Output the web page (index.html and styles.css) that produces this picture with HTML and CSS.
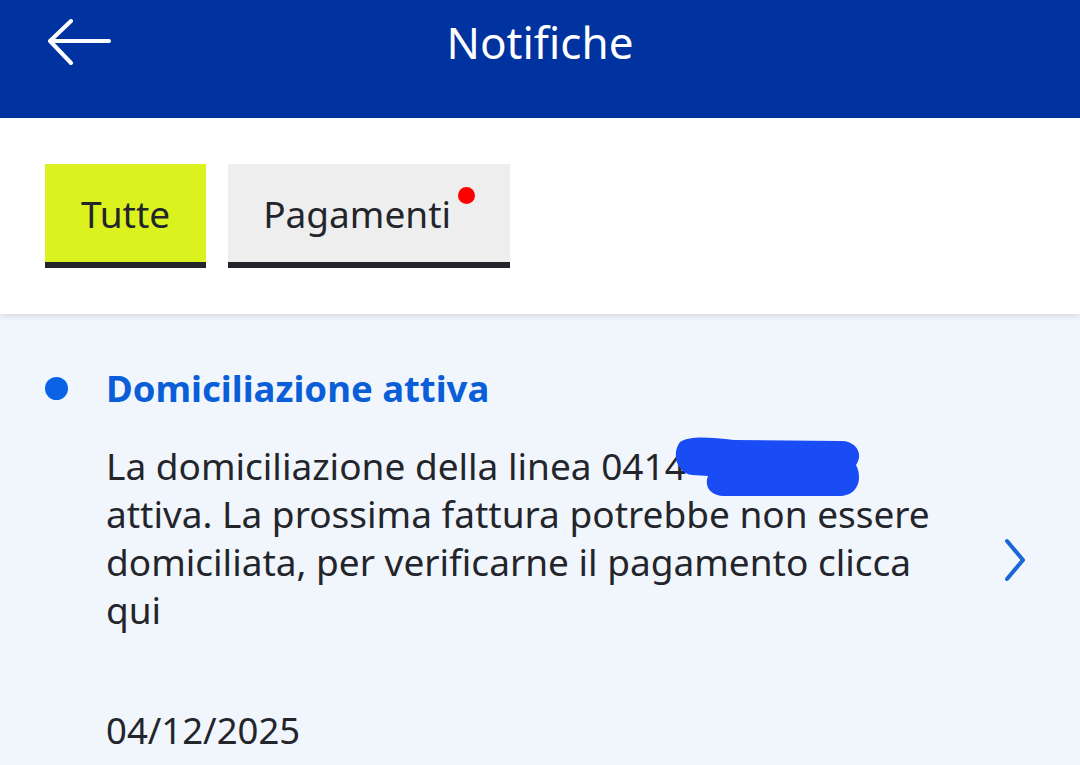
FILE: index.html
```html
<!DOCTYPE html>
<html lang="it">
  <head>
    <meta charset="utf-8">
    <title>Notifiche</title>
    <link rel="stylesheet" href="styles.css">
  </head>
  <body>
    <header class="topbar">
      <a class="back" href="#" aria-label="Indietro">
        <svg width="64" height="46" viewBox="0 0 64 46">
          <path d="M62 22 H4 M24 2 L3 22 L24 44" fill="none" stroke="#fff" stroke-width="4" stroke-linecap="round" stroke-linejoin="round"/>
        </svg>
      </a>
      <h1>Notifiche</h1>
    </header>

    <nav class="tabs">
      <button class="tab active">Tutte</button>
      <button class="tab">Pagamenti<span class="badge"></span></button>
    </nav>

    <section class="list">
      <article class="notice">
        <span class="unread"></span>
        <div class="notice-body">
          <h2>Domiciliazione attiva</h2>
          <p>La domiciliazione della linea 0414<br>
            attiva. La prossima fattura potrebbe non essere domiciliata, per verificarne il pagamento clicca qui
            <svg class="redact" width="190" height="66" viewBox="0 0 190 66">
              <path d="M8 8 C20 1 40 4 62 6 L168 7 C184 6 192 20 184 31 C190 42 188 60 170 62 L52 62 C38 62 32 52 36 42 L20 41 C5 39 -1 20 8 8 Z" fill="#1a4cf5"/>
            </svg>
          </p>
          <time>04/12/2025</time>
        </div>
        <svg class="chevron" width="24" height="44" viewBox="0 0 24 44">
          <path d="M4 3 L20 22 L4 41" fill="none" stroke="#1a66d6" stroke-width="4" stroke-linecap="round" stroke-linejoin="round"/>
        </svg>
      </article>
    </section>
  </body>
</html>
```

FILE: styles.css
```css
body {
  margin: 0;
  font-family: "Noto Sans", "Open Sans", sans-serif;
  background: #f1f6fd;
  color: #23252b;
}

.topbar {
  height: 118px;
  background: #0033a0;
  position: relative;
  display: flex;
  justify-content: center;
}
.topbar h1 {
  margin: 0;
  padding-top: 12px;
  font-size: 44px;
  font-weight: 400;
  color: #fff;
  line-height: 60px;
}
.back {
  position: absolute;
  left: 47px;
  top: 19px;
}

.tabs {
  background: #fff;
  height: 196px;
  box-sizing: border-box;
  padding: 46px 0 0 45px;
  display: flex;
  gap: 22px;
  align-items: flex-start;
  box-shadow: 0 2px 6px rgba(0, 0, 0, 0.12);
  position: relative;
}
.tab {
  height: 104px;
  border: 0;
  border-bottom: 6px solid #23252b;
  background: #eeeeef;
  font-family: inherit;
  font-size: 37px;
  color: #23252b;
  padding: 0 59px 0 35px;
  position: relative;
}
.tab.active {
  background: #dcf21e;
  padding: 0 36px;
}
.badge {
  position: absolute;
  right: 35px;
  top: 23px;
  width: 17px;
  height: 17px;
  border-radius: 50%;
  background: #ff0000;
}

.notice {
  display: flex;
  align-items: flex-start;
  padding: 54px 0 0 45px;
}
.unread {
  width: 23px;
  height: 23px;
  border-radius: 50%;
  background: #0a62e6;
  margin-top: 9px;
  flex: none;
}
.notice-body {
  margin-left: 38px;
  width: 860px;
}
.notice h2 {
  margin: 0;
  font-size: 36.5px;
  font-weight: 700;
  color: #0a5fd8;
  line-height: 40px;
}
.notice p {
  margin: 34px 0 0;
  font-size: 37px;
  line-height: 48px;
  position: relative;
}
.redact {
  position: absolute;
  left: 566px;
  top: -8px;
}
.notice time {
  display: block;
  margin-top: 72px;
  font-size: 36.5px;
  line-height: 48px;
}
.chevron {
  margin: 170px 0 0 37px;
  flex: none;
}
```
